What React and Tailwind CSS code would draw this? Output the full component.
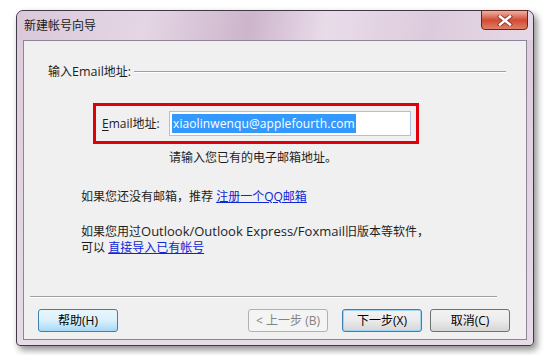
import React from "react";

const FONT = "font-['Open_Sans','Noto_Sans_CJK_SC',sans-serif]";

function CloseGlyph() {
  return (
    <svg width="16" height="11" viewBox="0 0 16 11">
      <path
        d="M3 1.5 L13 9.5 M13 1.5 L3 9.5"
        stroke="#5a1a16"
        strokeWidth="4.2"
        strokeLinecap="square"
        fill="none"
        opacity="0.6"
      />
      <path
        d="M3 1.5 L13 9.5 M13 1.5 L3 9.5"
        stroke="#ffffff"
        strokeWidth="2.4"
        strokeLinecap="square"
        fill="none"
      />
    </svg>
  );
}

function WinButton({ children, variant = "normal", className = "" }) {
  const styles = {
    normal:
      "border-[#707070] bg-gradient-to-b from-[#f2f2f2] via-[#ebebeb] to-[#d6d6d6] text-black",
    focus:
      "border-[#3c7fb1] bg-gradient-to-b from-[#eaf6fd] via-[#d9f0fc] to-[#a7d9f5] text-black",
    default:
      "border-[#3c7fb1] bg-gradient-to-b from-[#f2f2f2] via-[#ebebeb] to-[#d6d6d6] text-black shadow-[inset_0_0_0_1px_#9fd4f3]",
    disabled: "border-[#adb2b5] bg-[#f4f4f4] text-[#838383]",
  };
  return (
    <div
      className={`w-[80px] h-[23px] rounded-[3px] border flex items-center justify-center text-[12px] ${styles[variant]} ${className}`}
    >
      {children}
    </div>
  );
}

export default function App() {
  return (
    <div className={`w-[550px] h-[355px] bg-white pt-[10px] pl-[16px] ${FONT}`}>
      {/* window frame */}
      <div className="w-[518px] h-[336px] rounded-t-[7px] rounded-b-[4px] border border-[#3f3a44] bg-gradient-to-b from-[#dccbdc] to-[#e6dbe8] shadow-[3px_4px_7px_rgba(0,0,0,0.45)] flex flex-col">
        {/* title bar */}
        <div className="h-[29px] flex items-start rounded-t-[7px] bg-[linear-gradient(100deg,#d9c8d9_0%,#e4d6e4_25%,#cdb5cc_45%,#e9dce9_60%,#dccbdc_80%,#e6d9e6_100%)]">
          <div className="pl-[7px] pt-[6px] text-[12px] text-[#1a1a1a]">新建帐号向导</div>
          <div className="ml-auto mr-[5px] -mt-px w-[47px] h-[20px] rounded-b-[4px] border border-[#5c2a25] bg-gradient-to-b from-[#eeb0a4] via-[#d04a34] to-[#e07e66] flex items-center justify-center">
            <CloseGlyph />
          </div>
        </div>

        {/* client area */}
        <div className="mx-[6px] mb-[5px] flex-1 border border-[#8f8496] bg-[#f0f0f0] flex flex-col text-[12px] text-[#1e1e1e]">
          <div className="mt-[23px] h-[16px] flex items-center pl-[24px] pr-[20px]">
            <span>
              输入<span className="text-[12.5px]">Email</span>地址:
            </span>
            <div className="flex-1 ml-[3px] h-px bg-[#a0a0a0] border-b border-white box-content" />
          </div>

          <div className="mt-[23px] ml-[69px] w-[326px] h-[41px] border-[3px] border-[#e0000c] flex items-center pl-[6px]">
            <span className="w-[67px]">
              <span className="underline underline-offset-2">E</span>mail地址:
            </span>
            <div className="w-[242px] h-[25px] bg-white border border-[#a9c2df] flex items-center pl-[2px]">
              <span className="bg-[#3399ff] text-white text-[12px] tracking-[0.1px] leading-[19px] px-px">
                xiaolinwenqu@applefourth.com
              </span>
            </div>
          </div>

          <div className="mt-[6px] ml-[145px] h-[16px] leading-[16px]">请输入您已有的电子邮箱地址。</div>

          <div className="mt-[23px] ml-[57px] h-[16px] leading-[16px]">
            如果您还没有邮箱，推荐 <span className="text-[#0b27d6] underline">注册一个QQ邮箱</span>
          </div>

          <div className="mt-[19px] ml-[57px] flex flex-col gap-px">
            <div className="h-[15px] leading-[15px]">
              如果您用过<span className="text-[13px] leading-[15px]">Outlook/Outlook Express/Foxmail</span>旧版本等软件，
            </div>
            <div className="h-[15px] leading-[15px]">
              可以 <span className="text-[#0b27d6] underline">直接导入已有帐号</span>
            </div>
          </div>

          <div className="mt-[41px] ml-[6px] w-[467px] h-px bg-[#a0a0a0] border-b border-white box-content" />

          <div className="mt-[11px] flex items-center">
            <WinButton variant="focus" className="ml-[14px]">
              帮助(H)
            </WinButton>
            <WinButton variant="disabled" className="ml-[130px]">
              &lt; 上一步 (B)
            </WinButton>
            <WinButton variant="default" className="ml-[14px]">
              下一步(X)
            </WinButton>
            <WinButton variant="normal" className="ml-[8px]">
              取消(C)
            </WinButton>
          </div>
        </div>
      </div>
    </div>
  );
}
